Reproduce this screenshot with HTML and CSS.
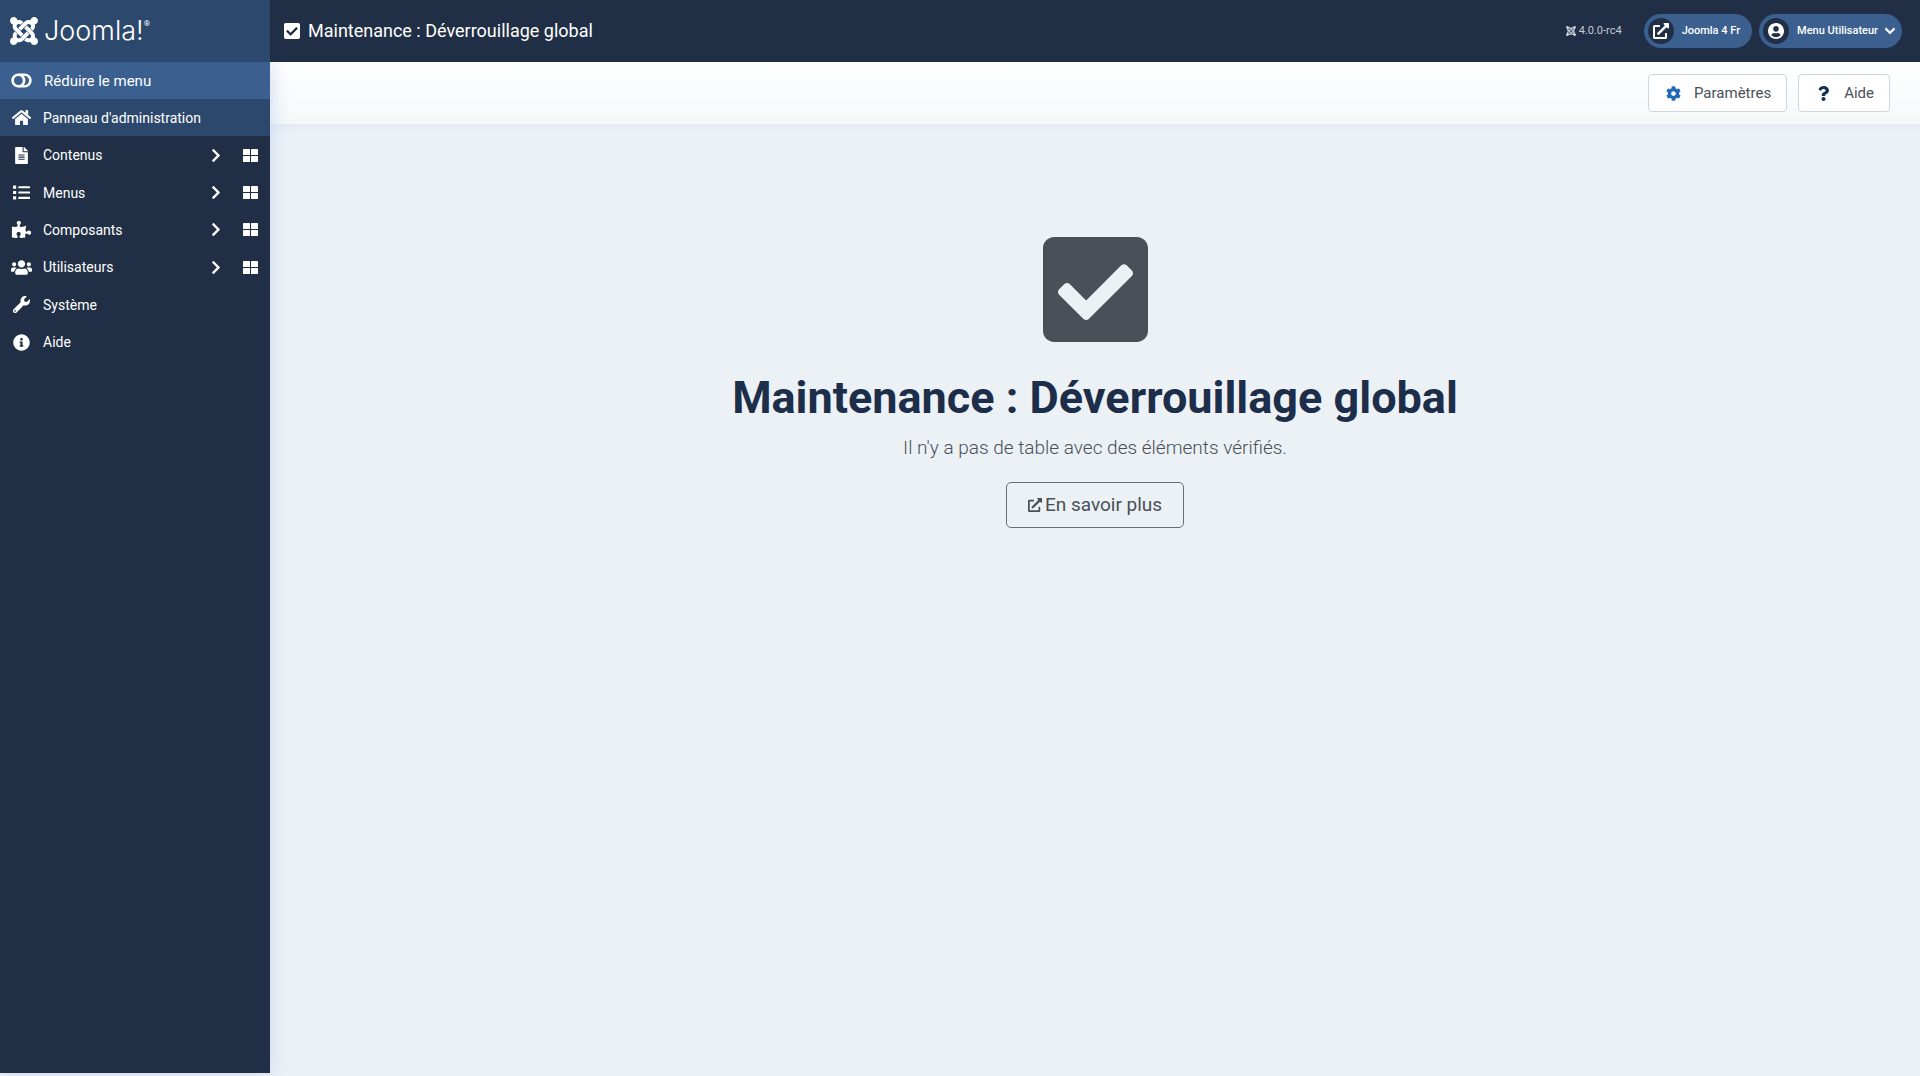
FILE: index.html
```html
<!DOCTYPE html>
<html lang="fr">
<head>
<meta charset="utf-8">
<meta name="viewport" content="width=device-width, initial-scale=1">
<title>Maintenance : Déverrouillage global</title>
<link rel="stylesheet" href="styles.css">
</head>
<body>
<svg class="sprite" aria-hidden="true">
  <symbol id="joomla" viewBox="0 32 448 448"><path d="M.6 92.1C.6 58.8 27.4 32 60.4 32c30 0 54.5 21.9 59.2 50.2 32.6-7.6 67.1.6 96.5 30l-44.3 44.3c-20.5-20.5-42.6-16.3-55.4-3.5-14.3 14.3-14.3 37.9 0 52.2l99.5 99.5-44 44.3c-87.7-87.2-49.7-49.7-99.8-99.7-26.8-26.5-35-64.8-24.8-98.9C20.4 144.6.6 120.7.6 92.1zm129.5 116.4l44.3 44.3c10-10 89.7-89.7 99.7-99.8 14.3-14.3 37.6-14.3 51.9 0 12.8 12.8 17 35-3.5 55.4l44 44.3c31.2-31.2 38.5-67.6 28.9-101.2 29.2-4.1 51.9-29.2 51.9-59.5 0-33.2-26.8-60.1-59.8-60.1-30.3 0-55.4 22.5-59.5 51.6-33.8-9.9-71.7-1.5-98.3 25.1-18.3 19.1-71.1 71.5-99.6 99.9zm266.3 152.2c8.2-32.7-.9-68.5-26.3-93.9-11.8-12.2 5 4.7-99.5-99.7l-44.3 44.3 99.7 99.7c14.3 14.3 14.3 37.6 0 51.9-12.8 12.8-35 17-55.4-3.5l-44 44.3c27.6 30.2 68 38.8 102.7 28 5.5 27.4 29.7 48.1 58.9 48.1 33 0 59.8-26.8 59.8-60.1 0-30.2-22.5-55-51.6-59.1zm-84.3-53.1l-44-44.3c-87 86.4-50.4 50.4-99.7 99.8-14.3 14.3-37.6 14.3-51.9 0-13.1-13.4-16.9-35.3 3.2-55.4l-44-44.3c-30.2 30.2-38 65.2-29.5 98.3-26.7 6-46.2 29.9-46.2 58.2C0 453.2 26.8 480 59.8 480c28.6 0 52.5-19.8 58.6-46.7 32.7 8.2 68.5-.6 94.2-26 32.1-32 12.2-12.4 99.5-99.7z"/></symbol>
  <symbol id="check-square" viewBox="0 32 448 448"><path d="M400 480H48c-26.51 0-48-21.49-48-48V80c0-26.51 21.49-48 48-48h352c26.51 0 48 21.49 48 48v352c0 26.51-21.49 48-48 48zm-204.686-98.059l184-184c6.248-6.248 6.248-16.379 0-22.627l-22.627-22.627c-6.248-6.248-16.379-6.249-22.628 0L184 302.745l-70.059-70.059c-6.248-6.248-16.379-6.248-22.628 0l-22.627 22.627c-6.248 6.248-6.248 16.379 0 22.627l104 104c6.249 6.25 16.379 6.25 22.628.001z"/></symbol>
  <symbol id="toggle" viewBox="0 0 40 28"><g fill="none" stroke="currentColor" stroke-width="5"><rect x="3" y="3" width="34" height="22" rx="11"/><path d="M14 3a11 11 0 0 1 0 22"/></g></symbol>
  <symbol id="home" viewBox="0 0 576 512"><path d="M280.37 148.26L96 300.11V464a16 16 0 0 0 16 16l112.06-.29a16 16 0 0 0 15.92-16V368a16 16 0 0 1 16-16h64a16 16 0 0 1 16 16v95.64a16 16 0 0 0 16 16.05L464 480a16 16 0 0 0 16-16V300L295.67 148.26a12.19 12.19 0 0 0-15.3 0zM571.6 251.47L488 182.56V44.05a12 12 0 0 0-12-12h-56a12 12 0 0 0-12 12v72.61L318.47 43a48 48 0 0 0-61 0L4.34 251.47a12 12 0 0 0-1.6 16.9l25.5 31A12 12 0 0 0 45.15 301l235.22-193.74a12.19 12.19 0 0 1 15.3 0L530.9 301a12 12 0 0 0 16.9-1.6l25.5-31a12 12 0 0 0-1.7-16.93z"/></symbol>
  <symbol id="file" viewBox="0 0 384 512"><path d="M224 136V0H24C10.7 0 0 10.7 0 24v464c0 13.3 10.7 24 24 24h336c13.3 0 24-10.7 24-24V160H248c-13.2 0-24-10.8-24-24zm64 236c0 6.6-5.4 12-12 12H108c-6.6 0-12-5.4-12-12v-8c0-6.6 5.4-12 12-12h168c6.6 0 12 5.4 12 12v8zm0-64c0 6.6-5.4 12-12 12H108c-6.6 0-12-5.4-12-12v-8c0-6.6 5.4-12 12-12h168c6.6 0 12 5.4 12 12v8zm0-72v8c0 6.6-5.4 12-12 12H108c-6.6 0-12-5.4-12-12v-8c0-6.6 5.4-12 12-12h168c6.6 0 12 5.4 12 12zm96-114.1v6.1H256V0h6.1c6.4 0 12.5 2.5 17 7l97.9 98c4.5 4.5 7 10.6 7 16.9z"/></symbol>
  <symbol id="list" viewBox="0 0 512 512"><rect y="48" width="96" height="96" rx="16"/><rect y="208" width="96" height="96" rx="16"/><rect y="368" width="96" height="96" rx="16"/><rect x="160" y="64" width="352" height="64" rx="16"/><rect x="160" y="224" width="352" height="64" rx="16"/><rect x="160" y="384" width="352" height="64" rx="16"/></symbol>
  <symbol id="puzzle" viewBox="0 0 576 512"><path d="M519.442 288.651c-41.519 0-59.5 31.593-82.058 31.593C377.409 320.244 432 144 432 144s-196.288 80-196.288-3.297c0-35.827 36.288-46.25 36.288-85.985C272 19.216 243.885 0 210.539 0c-34.654 0-66.366 18.891-66.366 56.346 0 41.364 31.711 59.277 31.711 81.75C175.885 207.719 0 166.758 0 166.758v333.237s178.635 41.047 178.635-28.662c0-22.473-40-40.107-40-81.471 0-37.456 29.25-56.346 63.577-56.346 33.673 0 61.788 19.216 61.788 54.717 0 39.735-36.288 50.158-36.288 85.985 0 60.803 129.675 25.73 181.23 25.73 0 0-34.725-120.101 25.827-120.101 35.962 0 46.423 36.152 86.308 36.152C556.712 416 576 387.99 576 354.443c0-34.199-18.962-65.792-56.558-65.792z"/></symbol>
  <symbol id="users" viewBox="0 0 640 512"><path d="M96 224c35.3 0 64-28.7 64-64s-28.7-64-64-64-64 28.7-64 64 28.7 64 64 64zm448 0c35.3 0 64-28.7 64-64s-28.7-64-64-64-64 28.7-64 64 28.7 64 64 64zm32 32h-64c-17.6 0-33.5 7.1-45.1 18.6 40.3 22.1 68.9 62 75.1 109.4h66c17.7 0 32-14.3 32-32v-32c0-35.3-28.7-64-64-64zm-256 0c61.9 0 112-50.1 112-112S381.9 32 320 32 208 82.1 208 144s50.1 112 112 112zm76.8 32h-8.3c-20.8 10-43.9 16-68.5 16s-47.6-6-68.5-16h-8.3C179.6 288 128 339.6 128 403.2V432c0 26.5 21.5 48 48 48h288c26.5 0 48-21.5 48-48v-28.8c0-63.6-51.6-115.2-115.2-115.2zm-223.7-13.4C161.5 263.1 145.6 256 128 256H64c-35.3 0-64 28.7-64 64v32c0 17.7 14.3 32 32 32h65.9c6.3-47.4 34.9-87.3 75.2-109.4z"/></symbol>
  <symbol id="wrench" viewBox="0 0 512 512"><path d="M507.73 109.1c-2.24-9.03-13.54-12.09-20.12-5.51l-74.36 74.36-67.88-11.31-11.31-67.88 74.36-74.36c6.62-6.62 3.43-17.9-5.66-20.16-47.38-11.74-99.55.91-136.58 37.93-39.64 39.64-50.55 97.1-34.05 147.2L18.74 402.76c-24.99 24.99-24.99 65.51 0 90.5 24.99 24.99 65.51 24.99 90.5 0l213.21-213.21c50.12 16.71 107.47 5.68 147.37-34.22 37.07-37.07 49.7-89.32 37.91-136.73zM64 472c-13.25 0-24-10.75-24-24 0-13.26 10.75-24 24-24s24 10.74 24 24c0 13.25-10.75 24-24 24z"/></symbol>
  <symbol id="info" viewBox="0 0 512 512"><path d="M256 8C119.043 8 8 119.083 8 256c0 136.997 111.043 248 248 248s248-111.003 248-248C504 119.083 392.957 8 256 8zm0 110c23.196 0 42 18.804 42 42s-18.804 42-42 42-42-18.804-42-42 18.804-42 42-42zm56 254c0 6.627-5.373 12-12 12h-88c-6.627 0-12-5.373-12-12v-24c0-6.627 5.373-12 12-12h12v-64h-12c-6.627 0-12-5.373-12-12v-24c0-6.627 5.373-12 12-12h64c6.627 0 12 5.373 12 12v100h12c6.627 0 12 5.373 12 12v24z"/></symbol>
  <symbol id="chevron-right" viewBox="0 0 320 512"><path d="M285.476 272.971L91.132 467.314c-9.373 9.373-24.569 9.373-33.941 0l-22.667-22.667c-9.357-9.357-9.375-24.522-.04-33.901L188.505 256 34.484 101.255c-9.335-9.379-9.317-24.544.04-33.901l22.667-22.667c9.373-9.373 24.569-9.373 33.941 0L285.475 239.03c9.373 9.372 9.373 24.568.001 33.941z"/></symbol>
  <symbol id="chevron-down" viewBox="0 0 448 512"><path stroke="currentColor" stroke-width="30" d="M207.029 381.476L12.686 187.132c-9.373-9.373-9.373-24.569 0-33.941l22.667-22.667c9.357-9.357 24.522-9.375 33.901-.04L224 284.505l154.745-154.021c9.379-9.335 24.544-9.317 33.901.04l22.667 22.667c9.373 9.373 9.373 24.569 0 33.941L240.971 381.476c-9.373 9.372-24.569 9.372-33.942 0z"/></symbol>
  <symbol id="dashboard" viewBox="0 0 30 26"><rect width="14" height="12" rx="1"/><rect x="16" width="14" height="12" rx="1"/><rect y="14" width="14" height="12" rx="1"/><rect x="16" y="14" width="14" height="12" rx="1"/></symbol>
  <symbol id="user" viewBox="0 8 496 496"><path d="M248 8C111 8 0 119 0 256s111 248 248 248 248-111 248-248S385 8 248 8zm0 96c48.6 0 88 39.4 88 88s-39.4 88-88 88-88-39.4-88-88 39.4-88 88-88zm0 344c-58.7 0-111.3-26.6-146.5-68.2 18.8-35.4 55.6-59.8 98.5-59.8 2.4 0 4.8.4 7.1 1.1 13 4.2 26.6 6.9 40.9 6.9 14.3 0 28-2.7 40.9-6.9 2.3-.7 4.7-1.1 7.1-1.1 42.9 0 79.7 24.4 98.5 59.8C359.3 421.4 306.7 448 248 448z"/></symbol>
  <symbol id="external" viewBox="0 0 512 512"><path d="M432,320H400a16,16,0,0,0-16,16V448H64V128H208a16,16,0,0,0,16-16V80a16,16,0,0,0-16-16H48A48,48,0,0,0,0,112V464a48,48,0,0,0,48,48H400a48,48,0,0,0,48-48V336A16,16,0,0,0,432,320ZM488,0h-128c-21.37,0-32.05,25.91-17,41l35.73,35.73L135,320.37a24,24,0,0,0,0,34L157.67,377a24,24,0,0,0,34,0L435.28,133.32,471,169c15,15,41,4.5,41-17V24A24,24,0,0,0,488,0Z"/></symbol>
  <symbol id="cog" viewBox="0 0 512 512"><path d="M487.4 315.7l-42.6-24.6c4.3-23.2 4.3-47 0-70.2l42.6-24.6c4.9-2.8 7.1-8.6 5.5-14-11.1-35.6-30-67.8-54.7-94.6-3.8-4.1-10-5.1-14.8-2.3L380.8 110c-17.9-15.4-38.5-27.3-60.8-35.1V25.8c0-5.6-3.9-10.5-9.4-11.7-36.7-8.2-74.3-7.8-109.2 0-5.5 1.2-9.4 6.1-9.4 11.7V75c-22.2 7.9-42.8 19.8-60.8 35.1L88.7 85.5c-4.9-2.8-11-1.9-14.8 2.3-24.7 26.7-43.6 58.9-54.7 94.6-1.7 5.4.6 11.2 5.5 14L67.3 221c-4.3 23.2-4.3 47 0 70.2l-42.6 24.6c-4.9 2.8-7.1 8.6-5.5 14 11.1 35.6 30 67.8 54.7 94.6 3.8 4.1 10 5.1 14.8 2.3l42.6-24.6c17.9 15.4 38.5 27.3 60.8 35.1v49.2c0 5.6 3.9 10.5 9.4 11.7 36.7 8.2 74.3 7.8 109.2 0 5.5-1.2 9.4-6.1 9.4-11.7v-49.2c22.2-7.9 42.8-19.8 60.8-35.1l42.6 24.6c4.9 2.8 11 1.9 14.8-2.3 24.7-26.7 43.6-58.9 54.7-94.6 1.5-5.5-.7-11.3-5.6-14.1zM256 336c-44.1 0-80-35.9-80-80s35.9-80 80-80 80 35.9 80 80-35.9 80-80 80z"/></symbol>
  <symbol id="question" viewBox="0 0 384 512"><path d="M202.021 0C122.202 0 70.503 32.703 29.914 91.026c-7.363 10.58-5.093 25.086 5.178 32.874l43.138 32.709c10.373 7.865 25.132 6.026 33.253-4.148 25.049-31.381 43.63-49.449 82.757-49.449 30.764 0 68.816 19.799 68.816 49.631 0 22.552-18.617 34.134-48.993 51.164-35.423 19.86-82.299 44.576-82.299 106.405V320c0 13.255 10.745 24 24 24h72.471c13.255 0 24-10.745 24-24v-5.773c0-42.86 125.268-44.645 125.268-160.627C377.504 66.256 286.902 0 202.021 0zM192 373.459c-38.196 0-69.271 31.075-69.271 69.271 0 38.195 31.075 69.27 69.271 69.27s69.271-31.075 69.271-69.271-31.075-69.27-69.271-69.27z"/></symbol>
</svg>

<header class="header">
  <a class="logo" href="#">
    <svg class="logo-mark" aria-hidden="true"><use href="#joomla"/></svg>
    <span class="logo-text">Joomla!</span><span class="logo-reg">®</span>
  </a>
  <div class="page-title">
    <svg class="title-icon" aria-hidden="true"><use href="#check-square"/></svg>
    <span>Maintenance : Déverrouillage global</span>
  </div>
  <div class="header-items">
    <span class="version"><svg class="version-icon" aria-hidden="true"><use href="#joomla"/></svg>4.0.0-rc4</span>
    <a class="pill" href="#"><span class="pill-icon"><svg aria-hidden="true"><use href="#external"/></svg></span>Joomla 4 Fr</a>
    <button class="pill" type="button"><span class="pill-icon"><svg aria-hidden="true"><use href="#user"/></svg></span>Menu Utilisateur<svg class="caret" aria-hidden="true"><use href="#chevron-down"/></svg></button>
  </div>
</header>

<div class="wrapper">
  <nav class="sidebar" aria-label="Menu principal">
    <button class="menu-toggle" type="button"><svg class="icon icon-wide" aria-hidden="true"><use href="#toggle"/></svg>Réduire le menu</button>
    <ul class="menu">
      <li class="item active"><a class="link" href="#"><svg class="icon" aria-hidden="true"><use href="#home"/></svg>Panneau d'administration</a></li>
      <li class="item"><a class="link" href="#"><svg class="icon" aria-hidden="true"><use href="#file"/></svg>Contenus<svg class="chevron" aria-hidden="true"><use href="#chevron-right"/></svg></a><a class="dash" href="#" aria-label="Tableau de bord Contenus"><svg aria-hidden="true"><use href="#dashboard"/></svg></a></li>
      <li class="item"><a class="link" href="#"><svg class="icon" aria-hidden="true"><use href="#list"/></svg>Menus<svg class="chevron" aria-hidden="true"><use href="#chevron-right"/></svg></a><a class="dash" href="#" aria-label="Tableau de bord Menus"><svg aria-hidden="true"><use href="#dashboard"/></svg></a></li>
      <li class="item"><a class="link" href="#"><svg class="icon" aria-hidden="true"><use href="#puzzle"/></svg>Composants<svg class="chevron" aria-hidden="true"><use href="#chevron-right"/></svg></a><a class="dash" href="#" aria-label="Tableau de bord Composants"><svg aria-hidden="true"><use href="#dashboard"/></svg></a></li>
      <li class="item"><a class="link" href="#"><svg class="icon" aria-hidden="true"><use href="#users"/></svg>Utilisateurs<svg class="chevron" aria-hidden="true"><use href="#chevron-right"/></svg></a><a class="dash" href="#" aria-label="Tableau de bord Utilisateurs"><svg aria-hidden="true"><use href="#dashboard"/></svg></a></li>
      <li class="item"><a class="link" href="#"><svg class="icon" aria-hidden="true"><use href="#wrench"/></svg>Système</a></li>
      <li class="item"><a class="link" href="#"><svg class="icon" aria-hidden="true"><use href="#info"/></svg>Aide</a></li>
    </ul>
  </nav>

  <div class="content">
    <div class="toolbar">
      <button class="tool" type="button"><svg class="tool-icon tool-icon-blue" aria-hidden="true"><use href="#cog"/></svg>Paramètres</button>
      <button class="tool" type="button"><svg class="tool-icon" aria-hidden="true"><use href="#question"/></svg>Aide</button>
    </div>
    <main class="empty">
      <svg class="empty-icon" aria-hidden="true"><use href="#check-square"/></svg>
      <h1 class="empty-title">Maintenance : Déverrouillage global</h1>
      <p class="empty-lead">Il n'y a pas de table avec des éléments vérifiés.</p>
      <a class="more" href="#"><svg class="more-icon" aria-hidden="true"><use href="#external"/></svg>En savoir plus</a>
    </main>
  </div>
</div>
</body>
</html>
```
FILE: styles.css
```css
* { box-sizing: border-box; }

body {
  margin: 0;
  min-height: 100vh;
  display: flex;
  flex-direction: column;
  padding-bottom: 3px;
  background: #ecf1f6;
  color: #495057;
  font: 14px/20px Roboto, sans-serif;
}

a { color: inherit; text-decoration: none; }
button { font: inherit; color: inherit; border: 0; background: none; padding: 0; cursor: pointer; }
svg { fill: currentColor; flex: none; }
.sprite { position: absolute; width: 0; height: 0; }

/* Header */
.header {
  position: relative;
  z-index: 2;
  display: flex;
  height: 62px;
  background: #202f45;
  color: #fff;
}
.logo {
  display: flex;
  align-items: center;
  width: 270px;
  padding-left: 10px;
  background: #2c486c;
}
.logo-mark { width: 28px; height: 28px; margin-right: 6px; }
.logo-text { font: 300 27px/28px Inter, sans-serif; }
.logo-reg { align-self: flex-start; padding-top: 16px; font-size: 8px; line-height: 16px; }
.page-title {
  display: flex;
  align-items: center;
  flex: 1;
  gap: 8px;
  padding-left: 14px;
  font-size: 18px;
}
.title-icon { width: 16px; height: 16px; }
.header-items { display: flex; align-items: center; padding-right: 18px; gap: 7px; }
.version {
  display: flex;
  align-items: center;
  gap: 3px;
  margin-right: 15px;
  font-size: 11px;
  color: #c3cad5;
}
.version-icon { width: 10px; height: 10px; }
.pill {
  display: flex;
  align-items: center;
  height: 34px;
  padding: 0 12px 0 4px;
  border-radius: 17px;
  background: #3b608f;
  font-size: 11px;
  font-weight: 500;
}
.pill-icon {
  display: grid;
  place-items: center;
  width: 26px;
  height: 26px;
  margin-right: 8px;
  border-radius: 50%;
  background: #202f45;
}
.pill-icon svg { width: 16px; height: 16px; }
.caret { width: 10px; height: 12px; margin: 0 -5px 0 7px; }

.wrapper { display: flex; flex: 1; }

/* Sidebar */
.sidebar {
  width: 270px;
  background: #202f45;
  color: #fff;
  box-shadow: 0 0 20px #c9d6ee;
  z-index: 1;
}
.menu-toggle {
  display: flex;
  align-items: center;
  width: 100%;
  height: 37px;
  padding-left: 11px;
  gap: 12px;
  background: #3b608f;
  font-size: 15px;
}
.menu {
  display: grid;
  grid-auto-rows: 1fr;
  height: 262px;
  margin: 0;
  padding: 0;
  list-style: none;
}
.item { display: flex; }
.active { background: #2c486c; }
.link { display: flex; align-items: center; flex: 1; gap: 11px; padding-left: 11px; }
.icon { width: 21px; height: 17px; }
.icon-wide { height: 15px; }
.chevron { width: 10px; height: 15px; margin: 0 9px 0 auto; }
.dash { display: flex; align-items: center; padding: 0 12px 0 13px; }
.dash svg { width: 15px; height: 13px; }

/* Content */
.content { flex: 1; }
.toolbar {
  display: flex;
  justify-content: flex-end;
  gap: 11px;
  padding: 12px 30px 12px 0;
  background: linear-gradient(#fff, #f5f8fa);
  box-shadow: 0 2px 8px #dde6f2;
}
.tool {
  display: flex;
  align-items: center;
  height: 38px;
  padding: 0 15px 0 17px;
  gap: 13px;
  border: 1px solid #cdd5df;
  border-radius: 4px;
  background: #fff;
  font-size: 15px;
}
.tool-icon { width: 15px; height: 15px; color: #132f53; }
.tool-icon-blue { color: #2269b8; }

.empty {
  display: flex;
  flex-direction: column;
  align-items: center;
  padding-top: 113px;
}
.empty-icon { width: 105px; height: 105px; }
.empty-title {
  margin: 28px 0 8px;
  font-size: 45px;
  line-height: 56px;
  font-weight: 700;
  color: #1c2e49;
}
.empty-lead { margin: 0 0 20px; font-size: 19px; line-height: 28px; font-weight: 300; }
.more {
  display: flex;
  align-items: center;
  height: 46px;
  padding: 0 21px;
  gap: 3px;
  border: 1px solid #6a7078;
  border-radius: 5px;
  font-size: 19px;
}
.more-icon { width: 14px; height: 14px; }
```
